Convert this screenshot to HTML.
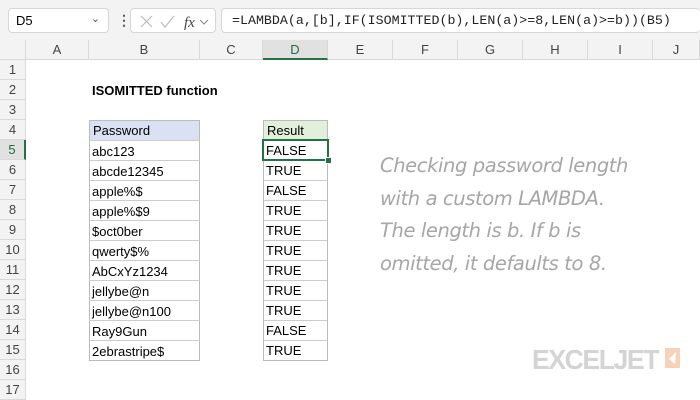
<!DOCTYPE html>
<html><head><style>
body{margin:0;width:700px;height:400px;overflow:hidden;background:#fff;font-family:"Liberation Sans",Calibri,sans-serif;position:relative}
.a{position:absolute}
.top{left:0;top:0;width:700px;height:40px;background:#f3f3f3}
.box{background:#fff;border:1px solid #d6d6d6;border-radius:4px;box-sizing:border-box}
.ch{top:40px;height:20px;background:#f3f3f3;border-right:1px solid #d9d9d9;border-bottom:1px solid #d9d9d9;box-sizing:border-box;font-size:13px;color:#444;text-align:center;line-height:20px}
.rh{left:0;width:26px;height:20px;background:#f3f3f3;border-bottom:1px solid #d9d9d9;border-right:1px solid #d9d9d9;box-sizing:border-box;font-size:13px;color:#444;text-align:center;line-height:20px}
.c{font-size:13px;line-height:21px;padding-left:3px;box-sizing:border-box;height:20px;color:#000}
</style></head><body>
<div class="a top"></div>
<div class="a box" style="left:8px;top:8px;width:101px;height:25px;font-size:13px;line-height:23px;padding-left:7px">D5<span style="position:absolute;right:8px;top:-1px;font-size:11px;color:#555">&#8964;</span></div>
<div class="a" style="left:117px;top:12px;font-size:14px;color:#555;font-weight:bold">&#8942;</div>
<div class="a box" style="left:130px;top:8px;width:86px;height:25px">
<svg width="86" height="25" style="position:absolute;left:0;top:0"><path d="M10 7l11 11M21 7L10 18" stroke="#bbb" stroke-width="1.2"/><path d="M30 13l4 5 9-11" stroke="#bbb" stroke-width="1.2" fill="none"/><text x="53" y="18" font-family="Liberation Serif" font-style="italic" font-size="15" fill="#444">fx</text><path d="M69 11l4 4 4-4" stroke="#888" fill="none"/></svg></div>
<div class="a box" style="left:221px;top:8px;width:479px;height:25px;border-right:none;font-family:'Liberation Mono',monospace;font-size:13.3px;line-height:23px;padding-left:10px;color:#222;white-space:nowrap">=LAMBDA(a,[b],IF(ISOMITTED(b),LEN(a)&gt;=8,LEN(a)&gt;=b))(B5)</div>
<div class="a ch" style="left:0;width:26px"></div>
<div class="a ch" style="left:26px;width:63px">A</div>
<div class="a ch" style="left:89px;width:111px">B</div>
<div class="a ch" style="left:200px;width:63px">C</div>
<div class="a ch" style="left:263px;width:65px;background:#e1e1e1;border-bottom:2px solid #217346;color:#1e6b3f">D</div>
<div class="a ch" style="left:328px;width:65px">E</div>
<div class="a ch" style="left:393px;width:65px">F</div>
<div class="a ch" style="left:458px;width:65px">G</div>
<div class="a ch" style="left:523px;width:65px">H</div>
<div class="a ch" style="left:588px;width:65px">I</div>
<div class="a ch" style="left:653px;width:47px">J</div>
<div class="a rh" style="top:60px">1</div><div class="a rh" style="top:80px">2</div><div class="a rh" style="top:100px">3</div><div class="a rh" style="top:120px">4</div>
<div class="a rh" style="top:140px;background:#e1e1e1;border-right:2px solid #217346;color:#1e6b3f">5</div>
<div class="a rh" style="top:160px">6</div><div class="a rh" style="top:180px">7</div><div class="a rh" style="top:200px">8</div><div class="a rh" style="top:220px">9</div><div class="a rh" style="top:240px">10</div><div class="a rh" style="top:260px">11</div><div class="a rh" style="top:280px">12</div><div class="a rh" style="top:300px">13</div><div class="a rh" style="top:320px">14</div><div class="a rh" style="top:340px">15</div><div class="a rh" style="top:360px">16</div><div class="a rh" style="top:380px">17</div>
<div class="a c" style="left:89px;top:80px;font-weight:bold">ISOMITTED function</div>
<div class="a" style="left:89px;top:120px;width:111px;border:1px solid #bbb;box-sizing:border-box;height:241px"></div>
<div class="a" style="left:263px;top:120px;width:65px;border:1px solid #bbb;box-sizing:border-box;height:241px"></div>
<div class="a c" style="left:90px;top:121px;width:109px;height:19px;background:#d9e1f2;line-height:20px">Password</div>
<div class="a c" style="left:264px;top:121px;width:63px;height:19px;background:#e2efda;line-height:20px">Result</div>
<div class="a" style="left:89px;top:140px">
<div class="c" style="border-top:1px solid #ccc;width:111px">abc123</div><div class="c" style="border-top:1px solid #ccc">abcde12345</div><div class="c" style="border-top:1px solid #ccc">apple%$</div><div class="c" style="border-top:1px solid #ccc">apple%$9</div><div class="c" style="border-top:1px solid #ccc">$oct0ber</div><div class="c" style="border-top:1px solid #ccc">qwerty$%</div><div class="c" style="border-top:1px solid #ccc">AbCxYz1234</div><div class="c" style="border-top:1px solid #ccc">jellybe@n</div><div class="c" style="border-top:1px solid #ccc">jellybe@n100</div><div class="c" style="border-top:1px solid #ccc">Ray9Gun</div><div class="c" style="border-top:1px solid #ccc">2ebrastripe$</div>
</div>
<div class="a" style="left:263px;top:140px;width:65px">
<div class="c">FALSE</div><div class="c">TRUE</div><div class="c">FALSE</div><div class="c">TRUE</div><div class="c">TRUE</div><div class="c">TRUE</div><div class="c">TRUE</div><div class="c">TRUE</div><div class="c">TRUE</div><div class="c">FALSE</div><div class="c">TRUE</div>
</div>
<div class="a" style="left:264px;width:63px;top:140px;height:220px;background:repeating-linear-gradient(#ccc 0 1px,transparent 1px 20px);z-index:-1"></div>
<div class="a" style="left:262px;top:139px;width:67px;height:22px;border:2px solid #217346;box-sizing:border-box"></div>
<div class="a" style="left:325px;top:157px;width:5px;height:5px;background:#217346;border:1px solid #fff"></div>
<div class="a" style="left:380px;top:150px;font-size:19.5px;line-height:32.5px;color:#a6a6a6;font-family:'DejaVu Sans',sans-serif;font-style:italic;letter-spacing:-0.4px">Checking password length<br>with a custom LAMBDA.<br>The length is b. If b is<br>omitted, it defaults to 8.</div>
<div class="a" style="left:532px;top:344px;font-size:28px;font-weight:bold;color:#d4d4d4;letter-spacing:-1.5px;transform:scaleX(0.95);transform-origin:left">EXCELJET</div>
<div class="a" style="left:665px;top:348px;width:15px;height:20px;background:#f6d2b8"></div>
<svg class="a" style="left:665px;top:348px" width="15" height="20"><path d="M11 4L4 11l6 5z" fill="#fff"/></svg>
</body></html>
